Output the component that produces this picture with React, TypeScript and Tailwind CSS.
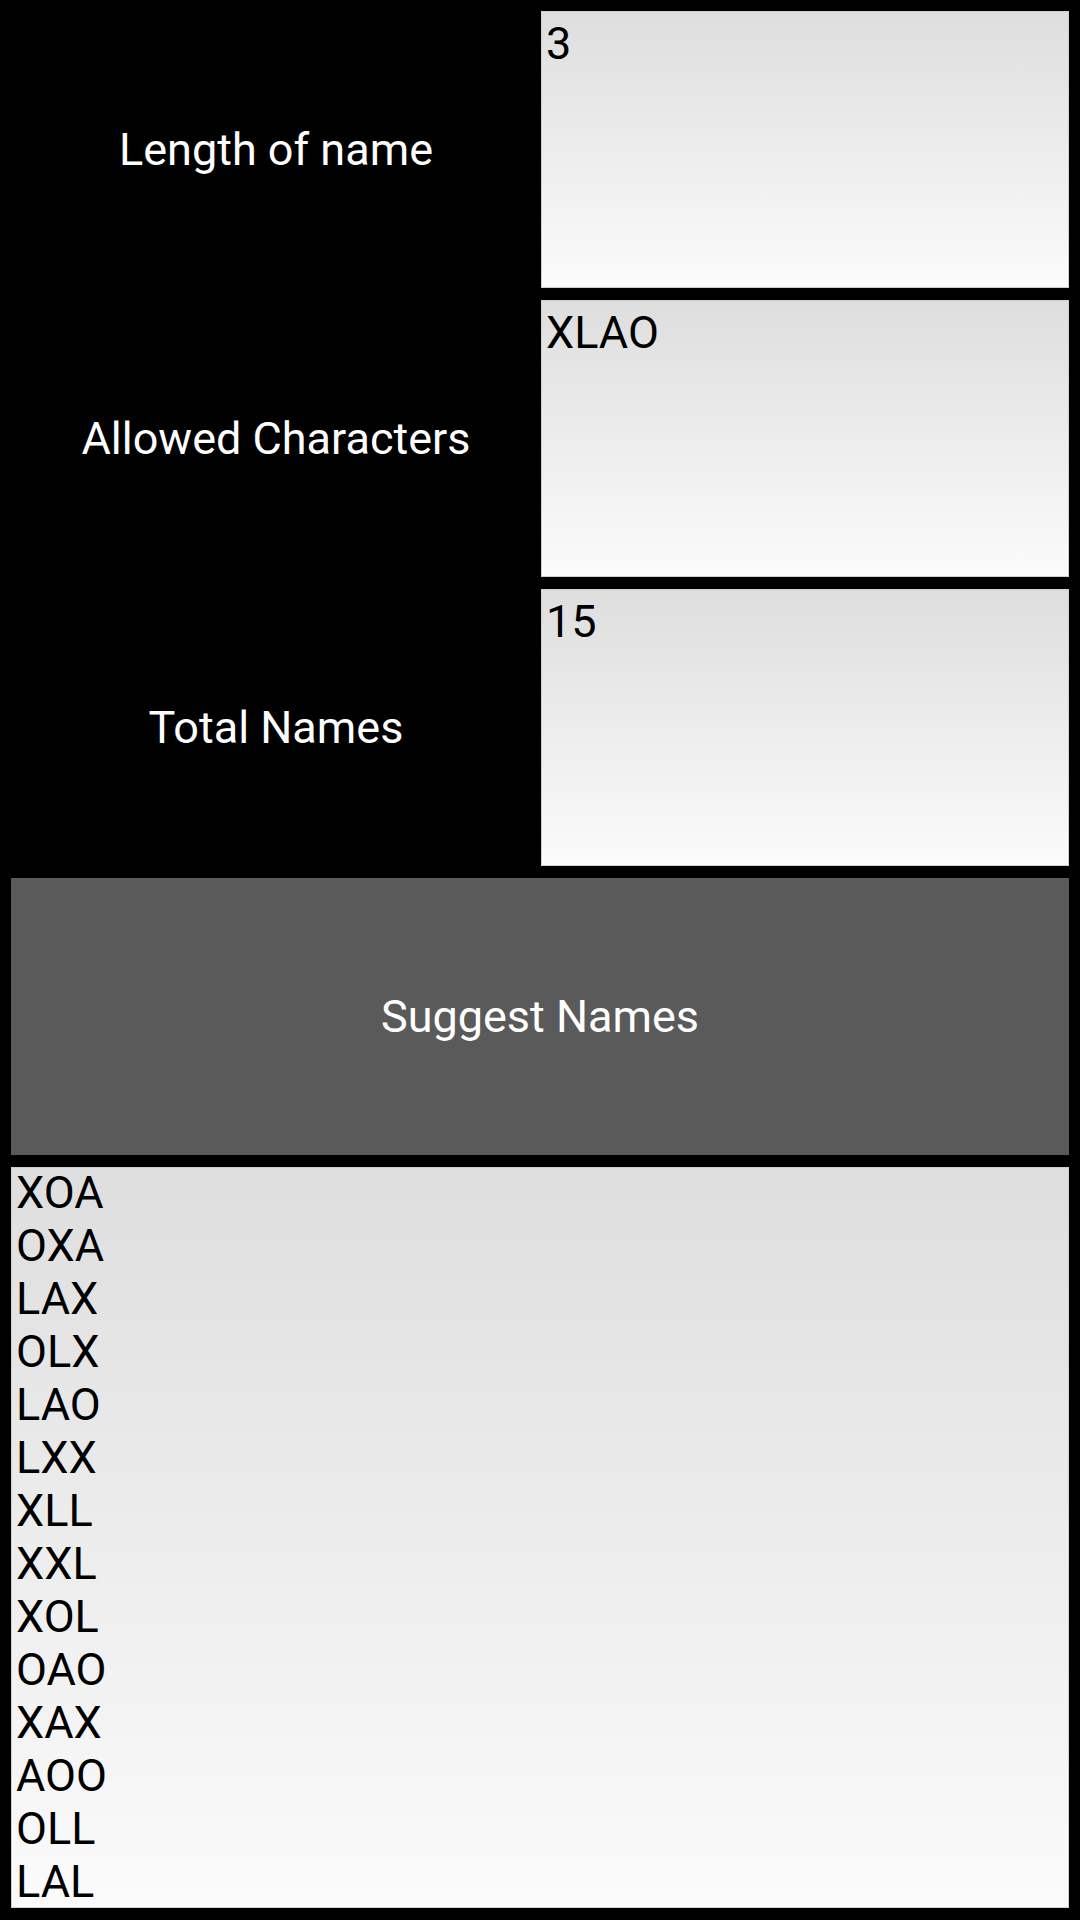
const fields = [
  { label: "Length of name", value: "3" },
  { label: "Allowed Characters", value: "XLAO" },
  { label: "Total Names", value: "15" },
];

const names = [
  "XOA", "OXA", "LAX", "OLX", "LAO", "LXX", "XLL",
  "XXL", "XOL", "OAO", "XAX", "AOO", "OLL", "LAL",
];

export default function App() {
  return (
    <div
      className="flex h-[1920px] w-[1080px] flex-col gap-[12px] bg-black px-[11px] pt-[11px]"
      style={{ fontFamily: "Roboto, 'Noto Sans', sans-serif" }}
    >
      {fields.map((f) => (
        <div key={f.label} className="flex h-[277px]">
          <div className="flex w-[530px] items-center justify-center text-[45px] text-white">
            {f.label}
          </div>
          <div className="flex-1 border border-[#cfcfcf] bg-gradient-to-b from-[#dedede] to-[#fbfbfb] px-[4px] pt-[5px] text-[45px] leading-[53px] text-black">
            {f.value}
          </div>
        </div>
      ))}

      <button className="flex h-[277px] items-center justify-center bg-[#5a5a5a] text-[45px] text-white">
        Suggest Names
      </button>

      <div className="h-[741px] overflow-hidden border border-[#cfcfcf] bg-gradient-to-b from-[#dedede] to-[#fbfbfb] px-[4px] text-[45px] leading-[53px] text-black">
        <div className="-mt-[2px]">
          {names.map((n) => (
            <div key={n}>{n}</div>
          ))}
        </div>
      </div>
    </div>
  );
}
